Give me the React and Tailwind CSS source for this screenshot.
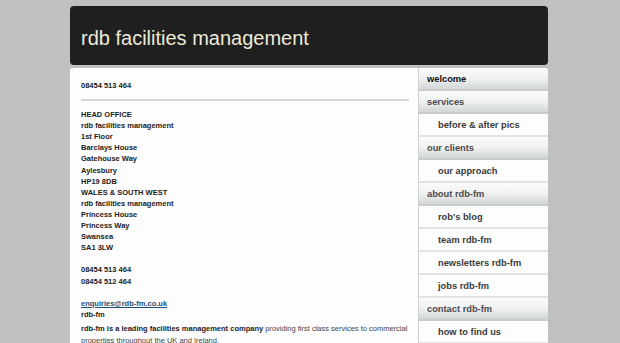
import React from 'react';

const nav = [
  { label: 'welcome', top: true, active: true },
  { label: 'services', top: true },
  { label: 'before & after pics' },
  { label: 'our clients', top: true },
  { label: 'our approach' },
  { label: 'about rdb-fm', top: true },
  { label: "rob's blog" },
  { label: 'team rdb-fm' },
  { label: 'newsletters rdb-fm' },
  { label: 'jobs rdb-fm' },
  { label: 'contact rdb-fm', top: true },
  { label: 'how to find us' },
];

const headOffice = [
  'HEAD OFFICE',
  'rdb facilities management',
  '1st Floor',
  'Barclays House',
  'Gatehouse Way',
  'Aylesbury',
  'HP19 8DB',
  'WALES & SOUTH WEST',
  'rdb facilities management',
  'Princess House',
  'Princess Way',
  'Swansea',
  'SA1 3LW',
];

function NavItem({ item }) {
  if (item.top) {
    return (
      <div className="h-[23px] flex items-center pl-[8px] pt-[3px] bg-gradient-to-b from-[#fbfbfb] via-[#f0f1f1] to-[#d3d7d7] border-b-[2px] border-[#c9cccc]">
        <span className={`text-[9.3px] font-bold ${item.active ? 'text-[#111]' : 'text-[#4a4a4a]'}`}>{item.label}</span>
      </div>
    );
  }
  return (
    <div className="h-[23px] flex items-center pl-[19px] pt-[3px] bg-[#fdfdfd] border-b-[2px] border-[#e2e4e4]">
      <span className="text-[9.3px] font-bold text-[#3a3a3a]">{item.label}</span>
    </div>
  );
}

export default function App() {
  return (
    <div className="w-[620px] h-[343px] overflow-hidden bg-[#c0c0c0] font-['Liberation_Sans',Arial,sans-serif]">
      <div className="ml-[70px] w-[478px] pt-[6px]">
        <div className="h-[59px] bg-[#1f1f1f] rounded-[4px] flex items-center pl-[11px] pt-[4px]">
          <h1 className="text-[20px] text-[#ece9d8]">rdb facilities management</h1>
        </div>

        <div className="mt-[3px] flex rounded-t-[3px] overflow-hidden">
          <div className="w-[348px] bg-[#fdfdfd] pl-[11px] pr-[9px] pt-[12px] text-[7.5px] leading-[11.1px] text-[#222] h-[300px]">
            <p className="font-bold">08454 513 464</p>
            <div className="mt-[8px] mb-[8px] h-[2px] bg-[#d4d6d6]" />
            {headOffice.map((l, i) => (
              <p key={i} className="font-bold">{l}</p>
            ))}
            <p className="h-[11.1px]" />
            <p className="font-bold">08454 513 464</p>
            <p className="font-bold">08454 512 464</p>
            <p className="h-[11.1px]" />
            <p className="font-bold">
              <a className="text-[#1d4e7a] underline">enquiries@rdb-fm.co.uk</a>
            </p>
            <p className="font-bold">rdb-fm</p>
            <p className="mt-[3px] leading-[12px] text-[#444]">
              <span className="font-bold text-[#222]">rdb-fm is a leading facilities management company</span> providing first class services to commercial properties throughout the UK and Ireland.
            </p>
          </div>
          <div className="w-[130px] border-l border-[#cfd1d1] bg-[#fdfdfd]">
            {nav.map((n) => (
              <NavItem key={n.label} item={n} />
            ))}
          </div>
        </div>
      </div>
    </div>
  );
}
